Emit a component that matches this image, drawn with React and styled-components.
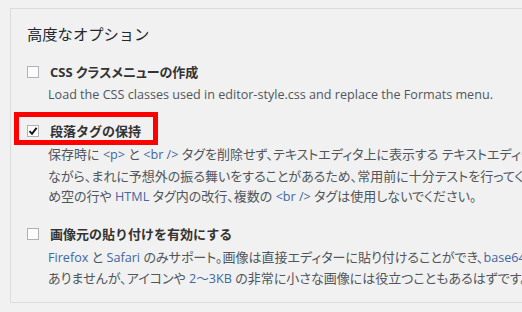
import React from "react";
import styled, { createGlobalStyle } from "styled-components";

const Global = createGlobalStyle`
  html, body {
    margin: 0;
    padding: 0;
    background: #f1f1f1;
    overflow: hidden;
  }
  body {
    font-family: "Open Sans", "Noto Sans CJK JP", sans-serif;
    color: #444;
  }
`;

const Page = styled.div`
  padding: 8px 0 0 10px;
`;

const Panel = styled.section`
  width: 760px;
  border: 1px solid #dcdcdc;
  border-right: none;
  padding: 13px 0 12px 16px;
`;

const Title = styled.h2`
  margin: 0 0 17.5px;
  font-family: "Noto Sans CJK JP", sans-serif;
  font-size: 15.3px;
  font-weight: 400;
  line-height: 22px;
  color: #23282d;
`;

const Item = styled.div`
  & + & {
    margin-top: 16px;
  }
`;

const LabelRow = styled.label`
  position: relative;
  display: flex;
  align-items: center;
  gap: 11px;
  height: 20px;
  line-height: 20px;
  font-family: "Open Sans", "Noto Sans CJK JP", sans-serif;
  font-size: 13px;
  font-weight: 700;
  color: #333;
  white-space: nowrap;
`;

const LabelText = styled.span`
  font-feature-settings: ${(p) => (p.$tight ? '"palt"' : "normal")};
`;

const Box = styled.span`
  display: inline-flex;
  align-items: center;
  justify-content: center;
  width: 12px;
  height: 12px;
  box-sizing: border-box;
  border: 1px solid #aeb2b7;
  background: #fcfcfc;
  flex: none;
`;

const Highlight = styled.span`
  position: absolute;
  left: -13px;
  top: -9px;
  bottom: -4px;
  width: 144px;
  box-sizing: border-box;
  border: 5px solid #ff0000;
  pointer-events: none;
`;

const Desc = styled.p`
  margin: 3px 0 0 21px;
  font-size: ${(p) => (p.$latin ? "12.6px" : "13px")};
  line-height: 20.5px;
  color: #50565c;
  font-feature-settings: "palt";
  white-space: nowrap;
`;

const Line = styled.span`
  display: block;
`;

const Code = styled.span`
  color: #3f67a0;
  font-size: 12.6px;
`;

function Checkbox({ checked }) {
  return (
    <Box>
      {checked && (
        <svg width="10" height="10" viewBox="0 0 10 10">
          <path d="M1.5 5.2 L4 7.8 L8.6 1.8" fill="none" stroke="#111" strokeWidth="1.9" />
        </svg>
      )}
    </Box>
  );
}

export default function App() {
  return (
    <>
      <Global />
      <Page>
        <Panel>
          <Title>高度なオプション</Title>

          <Item>
            <LabelRow>
              <Checkbox />
              <LabelText $tight>CSS クラスメニューの作成</LabelText>
            </LabelRow>
            <Desc $latin>
              <Line>Load the CSS classes used in editor-style.css and replace the Formats menu.</Line>
            </Desc>
          </Item>

          <Item>
            <LabelRow>
              <Highlight />
              <Checkbox checked />
              <LabelText>段落タグの保持</LabelText>
            </LabelRow>
            <Desc>
              <Line>
                保存時に <Code>&lt;p&gt;</Code> と <Code>&lt;br /&gt;</Code> タグを削除せず、テキストエディタ上に表示する テキストエディタ上でそのまま表示し
              </Line>
              <Line>ながら、まれに予想外の振る舞いをすることがあるため、常用前に十分テストを行ってください。また、このた</Line>
              <Line>
                め空の行や <Code>HTML</Code> タグ内の改行、複数の <Code>&lt;br /&gt;</Code> タグは使用しないでください。
              </Line>
            </Desc>
          </Item>

          <Item>
            <LabelRow>
              <Checkbox />
              <LabelText>画像元の貼り付けを有効にする</LabelText>
            </LabelRow>
            <Desc>
              <Line>
                <Code>Firefox</Code> と <Code>Safari</Code> のみサポート。画像は直接エディターに貼り付けることができ、<Code>base64</Code> でエンコードされます。
              </Line>
              <Line>
                ありませんが、アイコンや <Code>2〜3KB</Code> の非常に小さな画像には役立つこともあるはずです。
              </Line>
            </Desc>
          </Item>
        </Panel>
      </Page>
    </>
  );
}
